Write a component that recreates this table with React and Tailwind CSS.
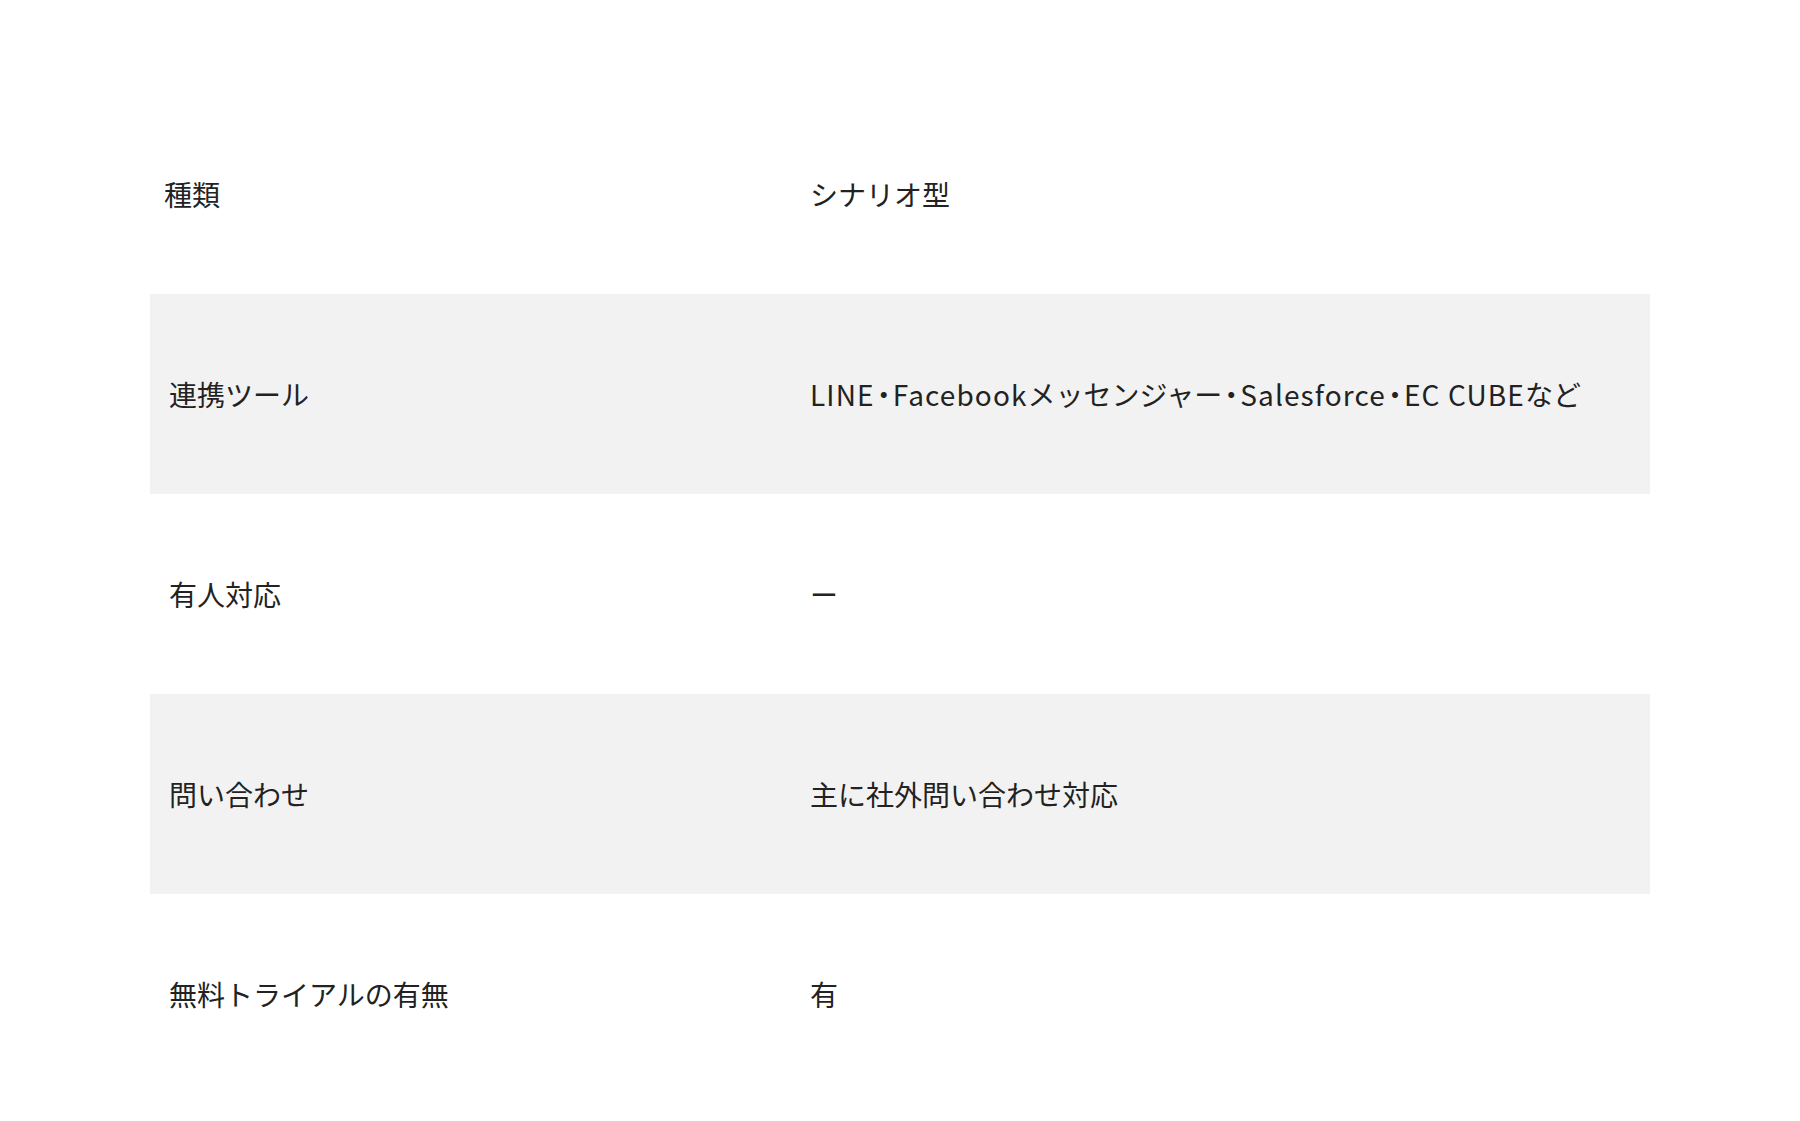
import React from "react";

// 英字はやや広め、中黒はプロポーショナル幅
const En = ({ children }) => <span className="tracking-[0.04em]">{children}</span>;
const Dot = () => <span className="[font-feature-settings:'palt'] px-[2px]">・</span>;

const rows = [
  { label: "種類", value: "シナリオ型" },
  {
    label: "連携ツール",
    value: (
      <>
        <En>LINE</En>
        <Dot />
        <En>Facebook</En>メッセンジャー
        <Dot />
        <En>Salesforce</En>
        <Dot />
        <En>EC CUBE</En>など
      </>
    ),
  },
  { label: "有人対応", value: "ー" },
  { label: "問い合わせ", value: "主に社外問い合わせ対応" },
  { label: "無料トライアルの有無", value: "有" },
];

export default function App() {
  return (
    <div className="min-h-[1121px] bg-white pt-[94px] font-['Noto_Sans_CJK_JP','Noto_Sans',sans-serif] text-[#222]">
      <table className="mx-auto w-[1500px] border-collapse">
        <tbody>
          {rows.map((row, i) => (
            <tr key={row.label} className={i % 2 === 1 ? "bg-[#f2f2f2]" : "bg-white"}>
              <td
                className={`h-[200px] w-[644px] pr-4 align-middle text-[28px] leading-none ${
                  i === 0 ? "pl-[14px]" : "pl-[19px]"
                }`}
              >
                {row.label}
              </td>
              <td className="h-[200px] px-4 align-middle text-[28px] leading-none whitespace-nowrap">
                {row.value}
              </td>
            </tr>
          ))}
        </tbody>
      </table>
    </div>
  );
}
